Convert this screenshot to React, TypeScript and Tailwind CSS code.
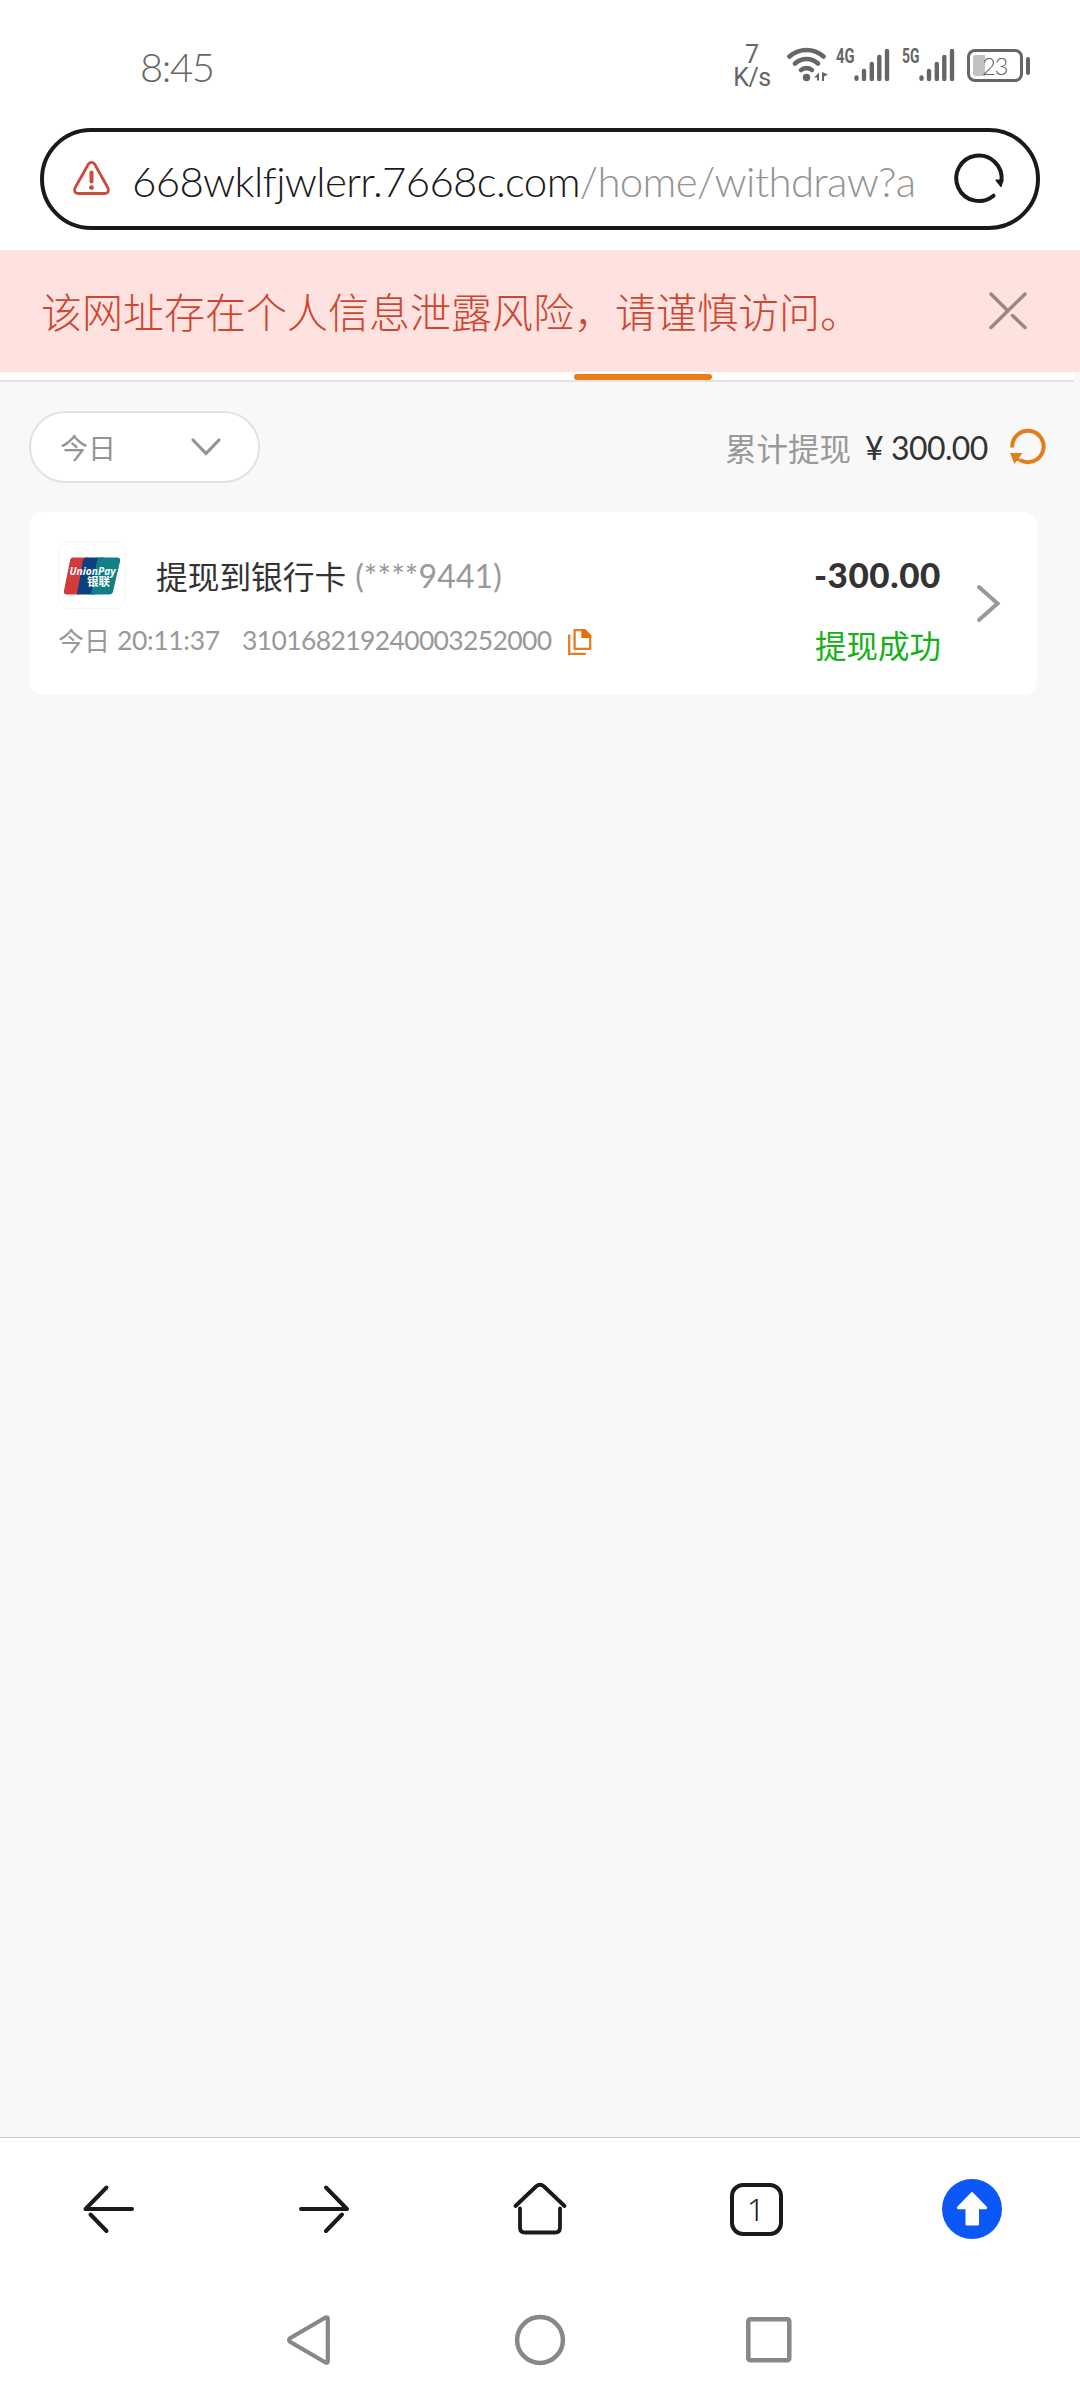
import React from "react";

function SignalBars() {
  return (
    <svg width="36" height="34" viewBox="0 0 36 34" fill="none" stroke="#666" strokeWidth="4.400" strokeLinecap="round">
      <path d="M2.500 29.500v1.300M10 23v8M17.800 16v15M25.300 9v22M33 3v28" />
    </svg>
  );
}

function StatusBar() {
  return (
    <div className="flex h-[128px] items-start text-[#666]">
      <div className="ml-[140px] mt-[43px] w-[80px] font-['Lato'] text-[40px] font-light leading-[48px] tracking-[-1.4px]">8:45</div>
      <div className="ml-[513px] mt-[43px] w-[38px] text-center font-['Roboto'] text-[25px] leading-[23px]">
        <div>7</div>
        <div className="tracking-[-0.5px]">K/s</div>
      </div>
      <svg className="ml-[16px] mt-[47px]" width="41" height="36" viewBox="0 0 41 36" fill="none" stroke="#666" strokeLinecap="round">
        <path d="M2.500 9.500C12.500 .8 26.500 .8 36.500 9.500" strokeWidth="4.600" />
        <path d="M8 16.500C15 10.500 24 10.500 31 16.500" strokeWidth="4.600" />
        <path d="M14 23C17.500 20.500 21.500 20.500 25 23" strokeWidth="4.600" />
        <circle cx="19.500" cy="30.500" r="3.700" fill="#666" stroke="none" />
        <path d="M27 30.500l5-5v8h-2v-3zM35 25l6 2.500-4 2v4.500h-2z" fill="#666" stroke="none" />
      </svg>
      <div className="ml-[8px] mt-[48px] flex">
        <span className="w-[18px] origin-left scale-x-[.7] whitespace-nowrap font-['Roboto'] text-[21px] font-bold leading-[16px]">4G</span>
        <SignalBars />
      </div>
      <div className="ml-[12px] mt-[48px] flex">
        <span className="w-[17px] origin-left scale-x-[.66] whitespace-nowrap font-['Roboto'] text-[21px] font-bold leading-[16px]">5G</span>
        <SignalBars />
      </div>
      <div className="ml-[12px] mt-[49px] flex items-center gap-[3px]">
        <div className="flex h-[33px] w-[56px] rounded-[8px] border-[3px] border-[#666] p-[3px]">
          <div className="relative h-full w-[12px] rounded-l-[3px] bg-[#c2c2c2]">
            <span className="absolute left-[9px] top-[-1px] font-['Lato'] text-[24px] font-light leading-[24px] tracking-[-1.500px]">23</span>
          </div>
        </div>
        <div className="h-[18px] w-[4px] rounded-full bg-[#666]" />
      </div>
    </div>
  );
}

function AddressBar() {
  return (
    <div className="mx-[40px] flex h-[102px] shrink-0 items-center rounded-full border-[4px] border-[#1a1a1a] bg-white">
      <svg className="ml-[27px] mt-[-1px]" width="41" height="40" viewBox="0 0 41 40" fill="none" stroke="#cc4a3a" strokeWidth="2.800" strokeLinejoin="round" strokeLinecap="round">
        <path d="M17.300 5.200q3.200-3.800 6.400 0L37 29q2 5.300-3.500 5.500H7.500Q2 34.300 4 29z" />
        <path d="M20.500 13.500v9" strokeWidth="4" />
        <circle cx="20.500" cy="28.600" r="2.400" fill="#cc4a3a" stroke="none" />
      </svg>
      <div className="ml-[20px] mt-[3px] w-[800px] whitespace-nowrap font-['Lato'] text-[42px] font-light leading-[60px] tracking-[-0.660px] text-[#1a1a1a]">
        668wklfjwlerr.7668c.com<span className="text-[#949494]">/home/withdraw?a</span>
      </div>
      <svg className="ml-[16px] mt-[-3px] shrink-0" width="60" height="56" viewBox="0 0 60 56" fill="none" stroke="#1a1a1a" strokeWidth="4" strokeLinecap="round">
        <path d="M53.500 31A22.700 22.700 0 1 0 45.500 45.700" />
        <path d="M48.300 30.200h6.200l-1.500 6z" fill="#1a1a1a" strokeWidth="1.600" strokeLinejoin="round" />
      </svg>
    </div>
  );
}

function RiskBanner() {
  return (
    <div className="mt-[20px] flex h-[122px] shrink-0 items-start justify-between bg-[#fde2df]">
      <div className="ml-[41px] mt-[30px] font-['Noto_Sans_CJK_SC'] text-[41px] font-light leading-[60px] text-[#d0452f]">该网址存在个人信息泄露风险，请谨慎访问。</div>
      <svg className="mr-[52px] mt-[41px]" width="40" height="40" viewBox="0 0 40 40" stroke="#9b8683" strokeWidth="3.500" strokeLinecap="round">
        <path d="M37 3L3 36.500M3 3l17 17M24.500 24.500L37 36.500" />
      </svg>
    </div>
  );
}

function FilterRow() {
  return (
    <div className="mt-[29px] flex h-[72px] items-center pl-[29px]">
      <div className="flex h-[72px] w-[231px] items-center rounded-full border-2 border-[#e2e2e2] bg-white">
        <span className="ml-[29px] mt-[-1px] w-[130px] font-['Noto_Sans_CJK_SC'] text-[28px] leading-[40px] text-[#949494]">今日</span>
        <svg className="mt-[-1px]" width="32" height="22" viewBox="0 0 32 22" fill="none" stroke="#949494" strokeWidth="3.200" strokeLinecap="round">
          <path d="M3 4l13 13.500L29 4" />
        </svg>
      </div>
      <div className="ml-[465px] flex items-center">
        <span className="mt-[-1px] w-[139px] font-['Noto_Sans_CJK_SC'] text-[31.500px] leading-[40px] text-[#999]">累计提现</span>
        <span className="mt-[2px] w-[27px] pl-[1px] font-['Lato'] text-[32px] leading-[40px] text-[#333]">¥</span>
        <span className="mt-[2px] w-[118px] font-['Lato'] text-[32px] leading-[40px] tracking-[-0.600px] text-[#333]">300.00</span>
        <svg width="38" height="40" viewBox="0 0 38 40" fill="none" stroke="#e27d1a" strokeWidth="4">
          <path d="M3.200 20.500V19.500A15.700 15.700 0 1 1 11 33" />
          <path d="M1 26h12.500l-3.500 4.500 2 4-4.500-.5-2 3z" fill="#e27d1a" stroke="none" />
        </svg>
      </div>
    </div>
  );
}

function UnionPayLogo() {
  return (
    <svg className="mt-[1px]" width="58" height="38" viewBox="0 0 58 38">
      <path d="M10 .5h15l-9 37H4q-4 0-3-4L7 3.500q.6-3 3-3z" fill="#d33a3c" />
      <path d="M24 .5h17l-9 37H14l6-34q.8-3 4-3z" fill="#0b4182" />
      <path d="M38 .5h16q4 0 3 4l-7 30q-.6 3-4 3H28l6-34q.8-3 4-3z" fill="#107f86" />
      <text x="6.500" y="18" fontFamily="Open Sans" fontWeight="700" fontStyle="italic" fontSize="10.500" fill="#fff" textLength="46" lengthAdjust="spacingAndGlyphs">UnionPay</text>
      <text x="24" y="29" fontFamily="Noto Sans CJK SC" fontWeight="700" fontSize="11.500" fill="#fff">银联</text>
    </svg>
  );
}

function TransactionCard() {
  return (
    <div className="ml-[29px] mt-[29px] flex h-[183px] w-[1008px] items-start rounded-[14px] bg-white">
      <div className="w-[720px] pl-[29px] pt-[29px]">
        <div className="flex items-center">
          <div className="flex h-[68px] w-[68px] items-center justify-center rounded-[12px] border border-[#f5f5f5]">
            <UnionPayLogo />
          </div>
          <span className="mb-[1px] ml-[30px] font-['Noto_Sans_CJK_SC'] text-[31.700px] leading-[44px] text-[#333]">提现到银行卡</span>
          <span className="ml-[9px] mt-[1px] font-['Lato'] text-[32px] leading-[44px] tracking-[0.100px] text-[#999]">(****9441)</span>
        </div>
        <div className="mt-[12px] flex h-[40px] items-center whitespace-nowrap text-[#999]">
          <span className="mb-[2px] w-[59px] font-['Noto_Sans_CJK_SC'] text-[26px] leading-[38px]">今日</span>
          <span className="w-[125px] font-['Lato'] text-[26.500px] tracking-[-0.350px]">20:11:37</span>
          <span className="w-[325px] font-['Lato'] text-[26.500px] tracking-[-0.630px]">310168219240003252000</span>
          <svg className="mt-[-1px]" width="26" height="28" viewBox="0 0 26 28" fill="none" stroke="#df7f27" strokeWidth="2.300">
            <path d="M2.200 7.500v19.300h16.600" />
            <path d="M7.600 3.100h10l5.600 5.600v13.200H7.600z" strokeLinejoin="round" />
            <path d="M14.300 2.200H18l6.300 6.200v2.500h-10z" fill="#e8700c" stroke="none" />
          </svg>
        </div>
      </div>
      <div className="flex w-[192px] flex-col items-end pt-[40px]">
        <span className="font-['Lato'] text-[35px] font-black leading-[44px] tracking-[0.600px] text-[#333]">-300.00</span>
        <span className="mt-[26px] font-['Noto_Sans_CJK_SC'] text-[31.500px] leading-[44px] text-[#16b01b]">提现成功</span>
      </div>
      <svg className="ml-[33px] mt-[70px]" width="30" height="44" viewBox="0 0 30 44" fill="none" stroke="#999" strokeWidth="4" strokeLinecap="round">
        <path d="M5 5l18.500 16.500L5 38" />
      </svg>
    </div>
  );
}

function BrowserToolbar() {
  const ink = { fill: "none", stroke: "#1a1a1a", strokeWidth: 4, strokeLinecap: "round" as const, strokeLinejoin: "round" as const };
  return (
    <div className="grid h-[148px] shrink-0 grid-cols-5 items-center justify-items-center border-t border-[#c8c8c8] bg-white pb-[5px]">
      <svg width="60" height="60" viewBox="0 0 60 60" {...ink}>
        <path d="M28.500 8.500L7.500 30h46.500M12.500 35.500l16 16.500" />
      </svg>
      <svg width="60" height="60" viewBox="0 0 60 60" {...ink}>
        <path d="M32 8.500L53 30H7M48 35.500l-16 16.500" />
      </svg>
      <svg width="60" height="60" viewBox="0 0 60 60" {...ink} strokeWidth={3.8}>
        <path d="M5.500 27L26 7.500q4-3.400 8 0L54.500 27M10 29.500v19q0 5 5 5h30q5 0 5-5v-19" />
      </svg>
      <div className="flex h-[53px] w-[53px] items-center justify-center rounded-[13px] border-[4px] border-[#1a1a1a] font-['Noto_Sans'] text-[32px] font-light leading-none text-[#1a1a1a]">
        <span>1</span>
      </div>
      <svg className="mr-[1px]" width="60" height="60" viewBox="0 0 60 60">
        <circle cx="30" cy="30" r="30" fill="#0b57f7" />
        <path d="M30 14L44 28.500V29.300H36V45.500H24.500V29.300H16V28.500z" fill="#fff" stroke="#fff" strokeWidth="2" strokeLinejoin="round" />
      </svg>
    </div>
  );
}

function SystemNav() {
  return (
    <div className="flex h-[115px] shrink-0 items-start bg-white pt-[27px]">
      <svg className="ml-[285px]" width="50" height="56" viewBox="0 0 50 56" fill="none" stroke="#888" strokeWidth="4.200" strokeLinejoin="round">
        <path d="M40.500 5.500q2.300-.8 2.300 1.500v42q0 2.300-2.300 1.500L5 29.700q-1.600-1.700 0-3.400z" />
      </svg>
      <svg className="ml-[177px]" width="56" height="56" viewBox="0 0 56 56" fill="none" stroke="#888" strokeWidth="4.500">
        <circle cx="28" cy="28" r="22.900" />
      </svg>
      <svg className="ml-[173px]" width="56" height="56" viewBox="0 0 56 56" fill="none" stroke="#888" strokeWidth="4.500">
        <rect x="7.300" y="7.200" width="41" height="41" rx="2" />
      </svg>
    </div>
  );
}

export default function App() {
  return (
    <div className="flex h-[2400px] w-[1080px] flex-col overflow-hidden bg-white font-['Lato','Noto_Sans_CJK_SC',sans-serif]">
      <StatusBar />
      <AddressBar />
      <RiskBanner />
      <main className="flex-1 bg-[#f8f8f8]">
        <div className="flex h-[10px] w-[1074px] border-b-2 border-[#e2e2e2] bg-white pt-[2px]">
          <div className="ml-[574px] h-[6px] w-[138px] rounded-full bg-[#ea7c14]" />
        </div>
        <FilterRow />
        <TransactionCard />
      </main>
      <BrowserToolbar />
      <SystemNav />
    </div>
  );
}
